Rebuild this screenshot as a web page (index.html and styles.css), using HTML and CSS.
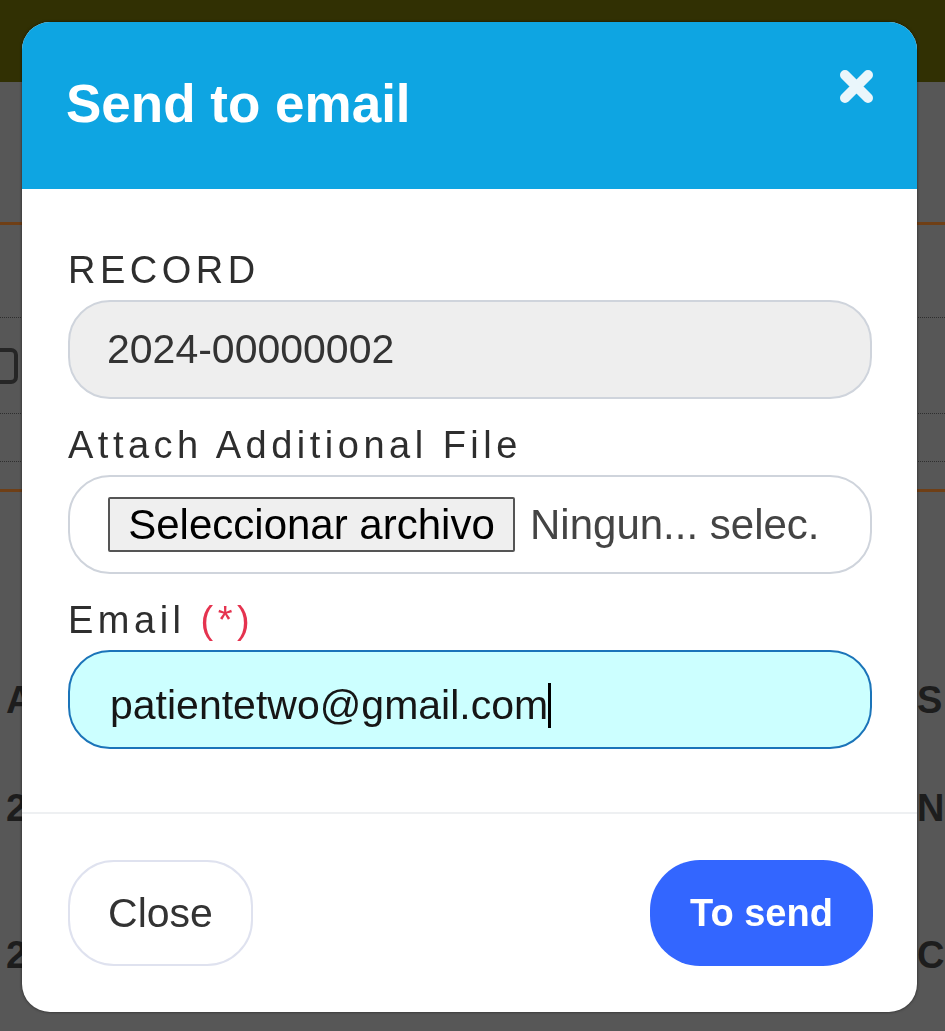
FILE: index.html
```html
<!DOCTYPE html>
<html lang="en">
<head>
<meta charset="utf-8">
<title>Send to email</title>
<link rel="stylesheet" href="styles.css">
</head>
<body>
<div class="page">
  <div class="topbar"></div>
  <div class="bg-rule orange first"></div>
  <div class="bg-rule dotted r1"></div>
  <div class="bg-filter"><div class="bg-box"></div></div>
  <div class="bg-rule dotted"></div>
  <div class="bg-rule dotted r3"></div>
  <div class="bg-rule orange r4"></div>
  <div class="bg-row row1"><span class="bg-left">A</span><span class="bg-right">S</span></div>
  <div class="bg-row row2"><span class="bg-left">2</span><span class="bg-right">N</span></div>
  <div class="bg-row row3"><span class="bg-left">2</span><span class="bg-right">C</span></div>
</div>

<div class="overlay">
  <div class="modal" role="dialog" aria-labelledby="modal-title">
    <div class="modal-header">
      <h2 class="modal-title" id="modal-title">Send to email</h2>
      <button class="close-x" aria-label="Close">
        <svg width="37" height="37" viewBox="0 0 37 37"><path d="M7 7 L30 30 M30 7 L7 30" stroke="#eaf6fb" stroke-width="10" stroke-linecap="round" fill="none"/></svg>
      </button>
    </div>
    <div class="modal-body">
      <div class="group">
        <label class="field-label">RECORD</label>
        <div class="field field-readonly">2024-00000002</div>
      </div>
      <div class="group">
        <label class="field-label">Attach Additional File</label>
        <div class="field field-file">
          <span class="file-btn">Seleccionar archivo</span>
          <span class="file-name">Ningun... selec.</span>
        </div>
      </div>
      <div class="group">
        <label class="field-label">Email <span class="req">(*)</span></label>
        <div class="field field-email">patientetwo@gmail.com<span class="caret"></span></div>
      </div>
    </div>
    <div class="modal-footer">
      <button class="btn btn-close">Close</button>
      <button class="btn btn-send">To send</button>
    </div>
  </div>
</div>
</body>
</html>
```
FILE: styles.css
```css
html, body {
  margin: 0;
  padding: 0;
}
body {
  width: 945px;
  height: 1031px;
  overflow: hidden;
  background: #575757;
  font-family: "Liberation Sans", Arial, sans-serif;
}

/* background page (dimmed) */
.page {
  width: 945px;
  height: 1031px;
  overflow: hidden;
}
.topbar {
  height: 82px;
  background: #313003;
}
.bg-rule.orange {
  height: 3px;
  background: #6f3f16;
}
.bg-rule.first { margin-top: 140px; }
.bg-rule.dotted {
  border-top: 1px dotted #2e2e2e;
}
.bg-rule.r1 { margin-top: 92px; }
.bg-filter {
  height: 95px;
  display: flex;
  align-items: center;
}
.bg-box {
  width: 40px;
  height: 28px;
  margin-left: -30px;
  border: 4px solid #262626;
  border-radius: 7px;
}
.bg-rule.r3 { margin-top: 47px; }
.bg-rule.r4 { margin-top: 27px; }
.bg-row {
  display: flex;
  height: 40px;
  align-items: center;
  padding-left: 6px;
  font-weight: 700;
  font-size: 38px;
  color: #1d1d1d;
  white-space: nowrap;
}
.bg-right { margin-left: auto; width: 28px; }
.row1 { margin-top: 188px; }
.row2 { margin-top: 68px; }
.row3 { margin-top: 107px; }

/* modal */
.overlay {
  position: fixed;
  inset: 0;
  padding: 22px 28px 19px 22px;
}
.modal {
  width: 895px;
  height: 990px;
  background: #fff;
  border-radius: 28px;
  overflow: hidden;
  box-shadow: 0 0 3px rgba(0, 0, 0, 0.6);
}
.modal-header {
  box-sizing: border-box;
  height: 167px;
  background: #0ea5e2;
  display: flex;
  justify-content: space-between;
  align-items: flex-start;
  padding: 52px 42px 0 44px;
}
.modal-title {
  margin: 0;
  font-size: 53px;
  line-height: 60px;
  font-weight: 700;
  color: #fff;
}
.close-x {
  margin-top: -6px;
  width: 37px;
  height: 37px;
  padding: 0;
  border: 0;
  background: none;
  display: block;
}
.close-x svg { display: block; }

.modal-body {
  padding: 59px 45px 63px 46px;
}
.group + .group {
  margin-top: 24px;
}
.field-label {
  display: block;
  font-size: 38px;
  line-height: 44px;
  letter-spacing: 4.5px;
  color: #2e2e2e;
  margin-bottom: 8px;
}
.req { color: #e5334f; }
.field {
  box-sizing: border-box;
  height: 99px;
  border: 2px solid #cfd4dc;
  border-radius: 42px;
  display: flex;
  align-items: center;
  padding: 0 37px;
  font-size: 41px;
  color: #333;
  white-space: nowrap;
}
.field-readonly {
  background: #eeeeee;
}
.field-file {
  background: #fff;
  padding-left: 38px;
}
.file-btn {
  box-sizing: border-box;
  height: 55px;
  width: 407px;
  border: 2px solid #555;
  border-radius: 2px;
  background: #efefef;
  color: #000;
  font-size: 42px;
  display: flex;
  align-items: center;
  justify-content: center;
}
.file-name {
  margin-left: 15px;
  font-size: 42px;
  color: #444;
}
.field-email {
  background: #ccffff;
  border-color: #1b74b9;
  color: #161616;
  padding-top: 12px;
  padding-left: 40px;
}
.caret {
  display: inline-block;
  width: 3px;
  height: 45px;
  background: #000;
  vertical-align: -3px;
}

.modal-footer {
  border-top: 2px solid #eef0f2;
  display: flex;
  justify-content: space-between;
  padding: 46px 44px 0 46px;
}
.btn {
  height: 106px;
  border-radius: 46px;
  font-family: "Liberation Sans", Arial, sans-serif;
  cursor: pointer;
  padding: 0;
}
.btn-close {
  width: 185px;
  background: #fff;
  border: 2px solid #dfe2ef;
  font-size: 41px;
  color: #333;
}
.btn-send {
  width: 223px;
  background: #3366ff;
  border: 0;
  border-radius: 50px;
  font-size: 38px;
  font-weight: 700;
  color: #fff;
}
```
